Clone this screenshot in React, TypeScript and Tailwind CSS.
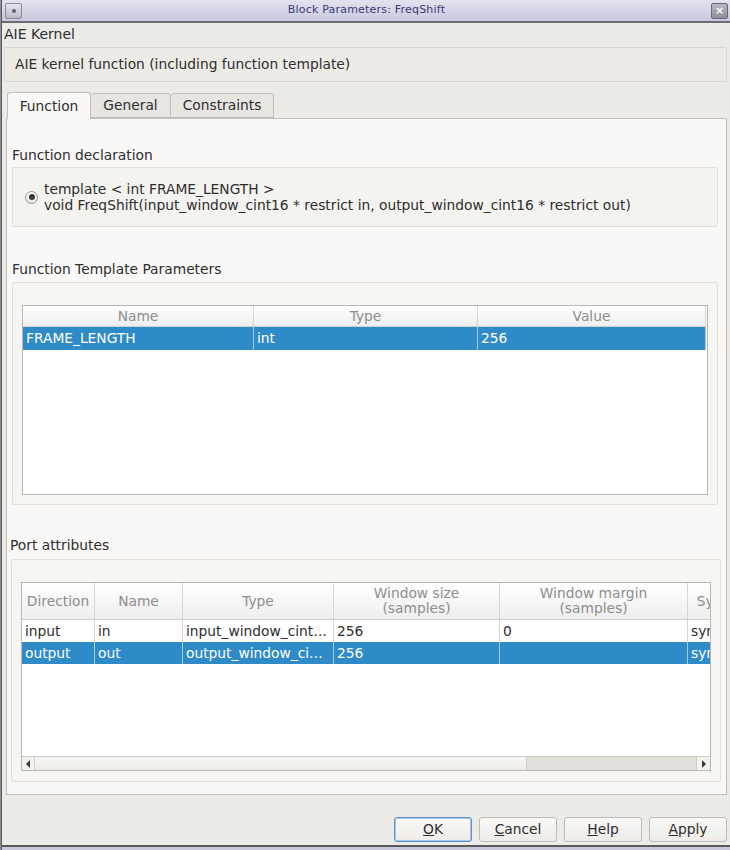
import React from 'react';

const font = { fontFamily: '"DejaVu Sans", "Liberation Sans", sans-serif' };

const paramCols = [
  { label: 'Name', w: 'w-[231px]' },
  { label: 'Type', w: 'w-[224px]' },
  { label: 'Value', w: 'w-[228px]' },
];

const portCols = [
  { label: ['Direction'], w: 'w-[73px]' },
  { label: ['Name'], w: 'w-[88px]' },
  { label: ['Type'], w: 'w-[151px]' },
  { label: ['Window size', '(samples)'], w: 'w-[166px]' },
  { label: ['Window margin', '(samples)'], w: 'w-[188px]' },
  { label: ['Sync'], w: 'w-[52px]' },
];

const portRows = [
  { cells: ['input', 'in', 'input_window_cint16', '256', '0', 'sync'], selected: false },
  { cells: ['output', 'out', 'output_window_cint16', '256', '', 'sync'], selected: true },
];

const DialogButton = ({ label, mnemonic, focused }: { label: string; mnemonic: number; focused?: boolean }) => (
  <button
    className={`w-[78px] h-[25px] rounded-[3px] border text-[13.8px] text-[#2e2e2e] bg-gradient-to-b from-[#fbfaf9] to-[#eeebe8] ${
      focused ? 'border-[#5a8fc8] shadow-[inset_0_0_0_1px_#a9c7e6]' : 'border-[#bdb9b4]'
    }`}
  >
    {label.slice(0, mnemonic)}
    <span className="underline">{label[mnemonic]}</span>
    {label.slice(mnemonic + 1)}
  </button>
);

const App = () => {
  return (
    <div className="w-[730px] h-[850px] bg-[#edebe7] text-[#2e2e2e] overflow-hidden flex" style={font}>
      <div className="w-[3px] bg-[#8c8c94] border-r border-[#5a5a5e]" />
      <div className="flex-1 flex flex-col">
        {/* title bar */}
        <div className="h-[23px] flex items-center justify-between px-[2px] bg-gradient-to-b from-[#e2e2f0] to-[#c9c9de] border-b-2 border-[#6b6b70]">
          <div className="w-[17px] h-[16px] rounded-[2px] border border-[#8a8a96] bg-gradient-to-b from-[#e6e6ee] to-[#b9b9c9] flex items-center justify-center ml-[1px]">
            <div className="w-[4px] h-[4px] rounded-full bg-[#606070]" />
          </div>
          <span className="text-[11px] text-[#3c3a78] tracking-[0.2px]">Block Parameters: FreqShift</span>
          <div className="w-[17px] h-[16px] rounded-[2px] border border-[#6a6a74] bg-gradient-to-b from-[#b8b8c4] to-[#8e8e9c] flex items-center justify-center text-white text-[11px] font-bold leading-none">
            ×
          </div>
        </div>

        <div className="pl-[2px] pr-[3px] flex flex-col">
          <div className="h-[22px] pt-[3px] text-[14px] leading-[17px]">AIE Kernel</div>
          <div className="mt-[2px] h-[35px] border border-[#dad7d2] bg-[#eeebe7] rounded-[2px] flex items-center pl-[10px] text-[13.8px]">
            AIE kernel function (including function template)
          </div>

          {/* tabs */}
          <div className="mt-[9px] ml-[3px] flex items-end h-[27px]">
            <div className="w-[84px] h-[27px] border border-b-0 border-[#c2beb9] rounded-t-[3px] bg-[#faf8f6] flex items-center justify-center text-[13.8px] relative z-10 -mb-px">
              Function
            </div>
            <div className="w-[80px] h-[25px] border border-[#c2beb9] border-l-0 rounded-t-[3px] bg-[#e8e5e1] flex items-center justify-center text-[13.8px]">
              General
            </div>
            <div className="w-[103px] h-[25px] border border-[#c2beb9] border-l-0 rounded-t-[3px] bg-[#e8e5e1] flex items-center justify-center text-[13.8px]">
              Constraints
            </div>
          </div>

          <div className="ml-[2px] w-[721px] h-[677px] border border-[#c2beb9] bg-[#faf8f6] flex flex-col">
            <div className="mt-[28px] ml-[5px] text-[13.8px] leading-[16px]">Function declaration</div>
            <div className="mt-[4px] ml-[5px] w-[706px] h-[60px] border border-[#e2dfdb] bg-[#f5f3f0] rounded-[2px] flex items-center pl-[12px] gap-[6px]">
              <div className="w-[13px] h-[13px] rounded-full border border-[#9a9690] bg-gradient-to-b from-white to-[#e8e6e3] flex items-center justify-center">
                <div className="w-[6px] h-[6px] rounded-full bg-[#3a3a3a]" />
              </div>
              <div className="text-[13.8px] leading-[16px]">
                <div>template &lt; int FRAME_LENGTH &gt;</div>
                <div>void FreqShift(input_window_cint16 * restrict in, output_window_cint16 * restrict out)</div>
              </div>
            </div>

            <div className="mt-[34px] ml-[5px] text-[13.8px] leading-[16px]">Function Template Parameters</div>
            <div className="mt-[5px] ml-[5px] w-[706px] h-[223px] border border-[#e2dfdb] bg-[#f7f5f2] rounded-[2px] pt-[22px] px-[9px]">
              <div className="h-[190px] border border-[#bab7b3] bg-white">
                <div className="flex h-[21px] bg-gradient-to-b from-white to-[#eeeeee] border-b border-[#d0d0d0]">
                  {paramCols.map((c) => (
                    <div key={c.label} className={`${c.w} border-r border-[#d6d6d6] flex items-center justify-center text-[13.8px] text-[#8d8d8d]`}>
                      {c.label}
                    </div>
                  ))}
                </div>
                <div className="flex h-[23px] text-white text-[13.8px]">
                  {['FRAME_LENGTH', 'int', '256'].map((v, i) => (
                    <div key={v} className={`${paramCols[i].w} bg-[#2f8bc8] border-r border-[#a8cde6] flex items-center pl-[3px]`}>
                      {v}
                    </div>
                  ))}
                </div>
              </div>
            </div>

            <div className="mt-[32px] ml-[3px] text-[13.8px] leading-[16px]">Port attributes</div>
            <div className="mt-[6px] ml-[4px] w-[710px] h-[223px] border border-[#e2dfdb] bg-[#f7f5f2] rounded-[2px] pt-[22px] px-[9px]">
              <div className="h-[189px] border border-[#bab7b3] bg-white flex flex-col overflow-hidden">
                <div className="flex-1 overflow-hidden">
                  <div className="flex h-[37px] bg-gradient-to-b from-white to-[#eeeeee] border-b border-[#cfcfcf] w-max">
                    {portCols.map((c) => (
                      <div key={c.label[0]} className={`${c.w} shrink-0 border-r border-[#d6d6d6] flex flex-col items-center justify-center text-[13.8px] leading-[15px] text-[#8d8d8d]`}>
                        {c.label.map((l) => (
                          <span key={l}>{l}</span>
                        ))}
                      </div>
                    ))}
                  </div>
                  {portRows.map((r) => (
                    <div key={r.cells[0]} className={`flex h-[22px] w-max text-[13.8px] leading-[22px] ${r.selected ? 'bg-[#2f8bc8] text-white' : 'bg-white text-[#2e2e2e]'}`}>
                      {r.cells.map((v, i) => (
                        <div
                          key={i}
                          className={`${portCols[i].w} shrink-0 pl-[3px] pr-[3px] truncate border-r ${
                            r.selected ? 'border-[#a8cde6]' : 'border-[#d6d6d6]'
                          }`}
                        >
                          {v}
                        </div>
                      ))}
                    </div>
                  ))}
                </div>
                {/* horizontal scrollbar */}
                <div className="h-[14px] flex border-t border-[#cfcbc6] bg-[#e2dfdb]">
                  <div className="w-[13px] border-r border-[#cfcbc6] bg-[#f4f2ef] flex items-center justify-center">
                    <div className="w-0 h-0 border-y-[4px] border-y-transparent border-r-[4px] border-r-[#3a3a3a]" />
                  </div>
                  <div className="w-[492px] bg-gradient-to-b from-[#f8f7f5] to-[#ecebe8] border-r border-[#cfcbc6]" />
                  <div className="flex-1" />
                  <div className="w-[14px] border-l border-[#cfcbc6] bg-[#f4f2ef] flex items-center justify-center">
                    <div className="w-0 h-0 border-y-[4px] border-y-transparent border-l-[4px] border-l-[#3a3a3a]" />
                  </div>
                </div>
              </div>
            </div>
          </div>

          {/* buttons */}
          <div className="mt-[22px] flex justify-end gap-[7px]">
            <DialogButton label="OK" mnemonic={0} focused />
            <DialogButton label="Cancel" mnemonic={0} />
            <DialogButton label="Help" mnemonic={0} />
            <DialogButton label="Apply" mnemonic={0} />
          </div>
        </div>
        <div className="mt-[3px] h-[2px] bg-[#5a5a5e]" />
        <div className="flex-1 bg-[#c9c9dc]" />
      </div>
    </div>
  );
};

export default App;
